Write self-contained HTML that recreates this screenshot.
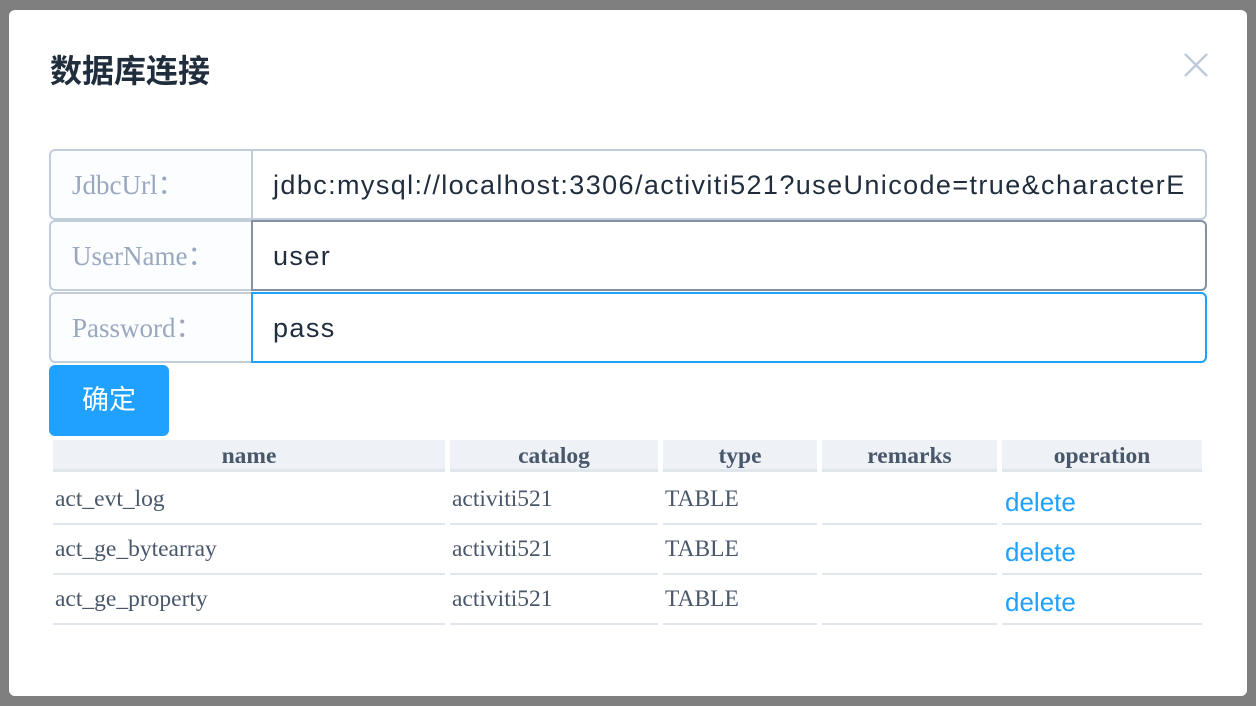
<!DOCTYPE html>
<html><head><meta charset="utf-8"><style>
*{box-sizing:border-box;margin:0;padding:0}
body{width:1256px;height:706px;background:#7f7f7f;position:relative;overflow:hidden;font-family:"Liberation Sans","Noto Sans CJK SC",sans-serif}
.modal{position:absolute;left:9px;top:10px;width:1238px;height:686px;background:#fff;border-radius:6px}
.title{position:absolute;left:50px;top:46px;font-size:32px;font-weight:bold;color:#1f2d3d;font-family:"Liberation Sans","Noto Sans CJK SC",sans-serif}
.close{position:absolute;left:1183px;top:52px;width:26px;height:26px}
.row{position:absolute;left:49px;width:1158px;height:71px}
.lab{position:absolute;left:0;top:0;width:204px;height:100%;background:#fbfdff;border:2px solid #c2cddb;border-right:none;border-radius:6px 0 0 6px;font-family:"Liberation Serif",serif;font-size:27px;color:#9aa8bf;padding:12px 0 0 21px}
.inp{position:absolute;left:202px;right:0;top:0;height:100%;border:2px solid #c2cddb;border-radius:0 6px 6px 0;font-size:27px;color:#1f2d3d;padding:19px 20px 0 20px;white-space:nowrap;overflow:hidden;letter-spacing:1.4px}
.btn{position:absolute;left:49px;top:365px;width:120px;height:71px;background:#20a0ff;border-radius:6px;color:#fff;font-size:27px;text-align:center;line-height:71px}
.cell{position:absolute;font-family:"Liberation Serif",serif;font-size:23.5px;color:#48576a}
.h{background:#eef1f6;height:32px;top:440px;text-align:center;font-weight:bold;line-height:32px;border-bottom:3px solid #dfe6ec}
.d{height:50px;border-bottom:2px solid #dfe6ec;padding:11px 0 0 2px}
.del{color:#20a0ff;font-family:"Liberation Sans",sans-serif;font-size:26px;padding-left:3px;padding-top:12px}
</style></head><body>
<div class="modal"></div>
<div class="title">数据库连接</div>
<svg class="close" viewBox="0 0 26 26"><path d="M2 2L24 24M24 2L2 24" stroke="#bfcbd9" stroke-width="2.5"/></svg>
<div class="row" style="top:149px"><div class="lab">JdbcUrl：</div><div class="inp" style="padding-right:22px">jdbc:mysql://localhost:3306/activiti521?useUnicode=true&amp;characterE</div></div>
<div class="row" style="top:220px"><div class="lab">UserName：</div><div class="inp" style="border-color:#8391a5">user</div></div>
<div class="row" style="top:292px"><div class="lab">Password：</div><div class="inp" style="border-color:#20a0ff">pass</div></div>
<div class="btn">确定</div>

<div class="cell h" style="left:53px;width:392px">name</div>
<div class="cell h" style="left:450px;width:208px">catalog</div>
<div class="cell h" style="left:663px;width:154px">type</div>
<div class="cell h" style="left:822px;width:175px">remarks</div>
<div class="cell h" style="left:1002px;width:200px">operation</div>

<div class="cell d" style="left:53px;width:392px;top:475px">act_evt_log</div>
<div class="cell d" style="left:450px;width:208px;top:475px">activiti521</div>
<div class="cell d" style="left:663px;width:154px;top:475px">TABLE</div>
<div class="cell d" style="left:822px;width:175px;top:475px"></div>
<div class="cell d del" style="left:1002px;width:200px;top:475px">delete</div>

<div class="cell d" style="left:53px;width:392px;top:525px">act_ge_bytearray</div>
<div class="cell d" style="left:450px;width:208px;top:525px">activiti521</div>
<div class="cell d" style="left:663px;width:154px;top:525px">TABLE</div>
<div class="cell d" style="left:822px;width:175px;top:525px"></div>
<div class="cell d del" style="left:1002px;width:200px;top:525px">delete</div>

<div class="cell d" style="left:53px;width:392px;top:575px">act_ge_property</div>
<div class="cell d" style="left:450px;width:208px;top:575px">activiti521</div>
<div class="cell d" style="left:663px;width:154px;top:575px">TABLE</div>
<div class="cell d" style="left:822px;width:175px;top:575px"></div>
<div class="cell d del" style="left:1002px;width:200px;top:575px">delete</div>
</body></html>
